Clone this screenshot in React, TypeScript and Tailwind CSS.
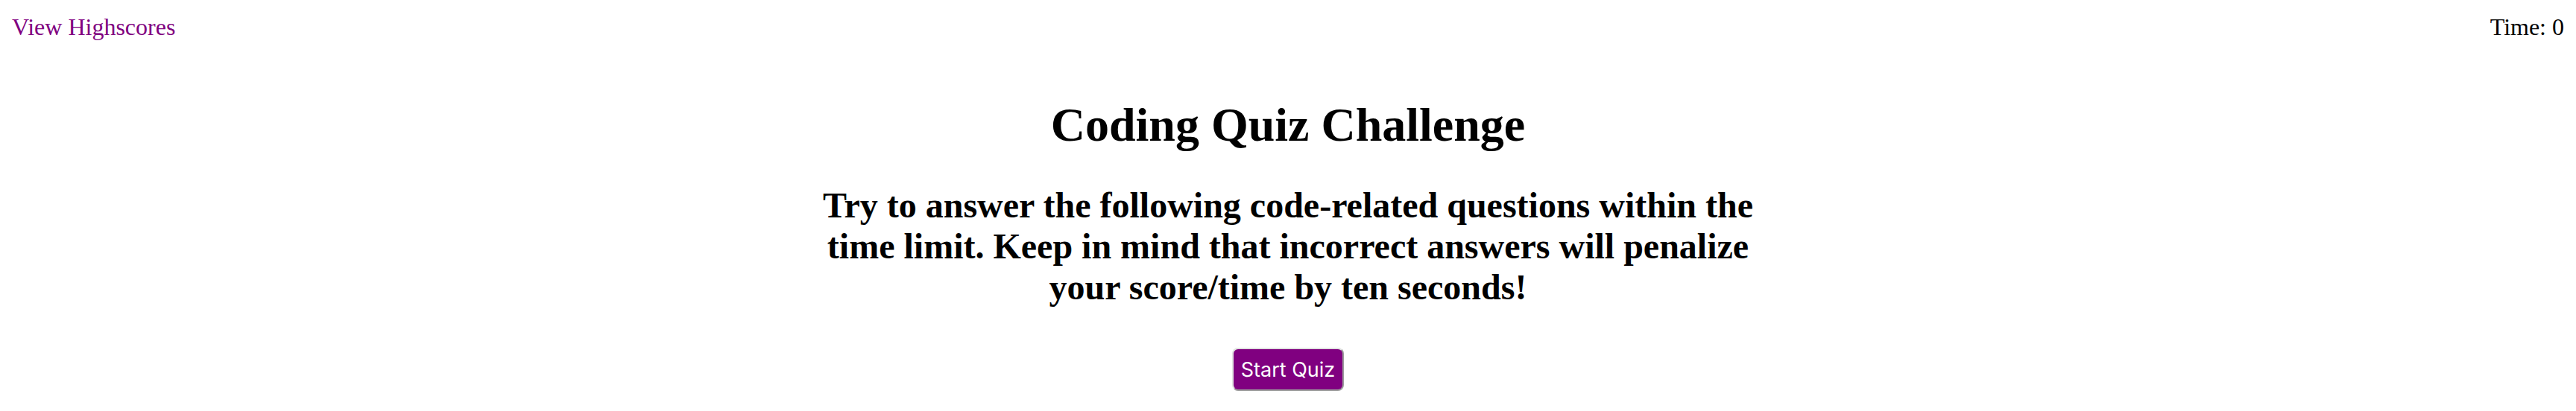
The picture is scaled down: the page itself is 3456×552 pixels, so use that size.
import { useState } from 'react';

const serif = "font-['Times_New_Roman','Liberation_Serif',Times,serif]";

export default function App() {
  const [time] = useState(0);

  return (
    <div className={`min-h-[552px] w-full bg-white text-black ${serif}`}>
      <header className="flex items-start justify-between px-4 pt-[18px] text-[32px] leading-[36px]">
        <a href="#" className="text-[#800080]">
          View Highscores
        </a>
        <span>Time: {time}</span>
      </header>

      <main className="flex flex-col items-center text-center">
        <h1 className="mt-[78px] text-[64px] font-bold leading-[72px]">Coding Quiz Challenge</h1>
        <p className="mt-[44px] w-[1300px] text-[48px] font-bold leading-[55px]">
          Try to answer the following code-related questions within the time limit. Keep in mind that
          incorrect answers will penalize your score/time by ten seconds!
        </p>
        <button
          type="button"
          className="mt-[54px] flex h-[58px] w-[150px] items-center justify-center rounded-[8px] border-2 border-t-[#e2e2e2] border-l-[#e2e2e2] border-r-[#9c9c9c] border-b-[#9c9c9c] bg-[#800080] font-['Inter',sans-serif] text-[27px] leading-none text-white"
        >
          Start Quiz
        </button>
      </main>
    </div>
  );
}
